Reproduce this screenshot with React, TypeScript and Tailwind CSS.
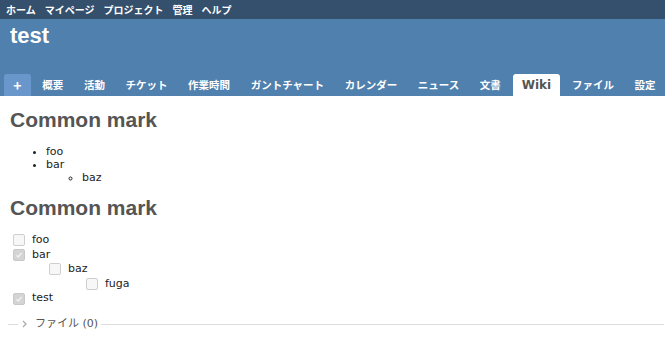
import React from "react";

const topItems = ["ホーム", "マイページ", "プロジェクト", "管理", "ヘルプ"];
const tabs = ["概要", "活動", "チケット", "作業時間", "ガントチャート", "カレンダー", "ニュース", "文書", "Wiki", "ファイル", "設定"];

function Box({ checked, className }: { checked?: boolean; className?: string }) {
  return (
    <span
      className={
        "inline-flex items-center justify-center w-[12px] h-[12px] rounded-[2px] border " +
        (checked ? "border-[#c8c8c8] bg-[#d4d4d4]" : "border-[#cfcfcf] bg-[#f7f7f7]") +
        " " +
        (className ?? "")
      }
    >
      {checked && (
        <svg width="8" height="8" viewBox="0 0 8 8">
          <path d="M1.5 4.2 L3.2 6 L6.6 1.8" stroke="#f4f4f4" strokeWidth="1.3" fill="none" />
        </svg>
      )}
    </span>
  );
}

export default function App() {
  return (
    <div className="w-[665px] h-[341px] overflow-hidden bg-white font-['DejaVu_Sans','Noto_Sans_CJK_JP',sans-serif]">
      <div className="h-[19px] bg-[#34506d] flex items-center gap-[9px] pl-[6px] text-[10px] font-bold text-white font-['Noto_Sans_CJK_JP',sans-serif]">
        {topItems.map((t) => (
          <span key={t}>{t}</span>
        ))}
      </div>
      <div className="h-[77px] bg-[#5080ad] flex flex-col justify-between">
        <h1 className="pl-[10px] pt-[3px] text-[22px] leading-[28px] font-bold text-white font-['Liberation_Sans',sans-serif]">test</h1>
        <ul className="flex items-end pl-[4px] h-[22px] whitespace-nowrap font-['Noto_Sans_CJK_JP',sans-serif] font-bold text-[10.5px] text-white">
          <li className="shrink-0 w-[27px] h-[22px] mr-[1px] rounded-t-[3px] bg-[#6a97cb] flex items-center justify-center text-[14px]">+</li>
          {tabs.map((t) => (
            <li
              key={t}
              className={
                t === "Wiki"
                  ? "shrink-0 h-[22px] px-[9px] mx-[1.5px] rounded-t-[3px] bg-white text-[#555] text-[12px] font-['DejaVu_Sans',sans-serif] flex items-center"
                  : "shrink-0 h-[22px] px-[10.3px] flex items-center"
              }
            >
              {t}
            </li>
          ))}
        </ul>
      </div>
      <div className="px-[10px] text-[11px] text-[#222]">
        <h2 className="mt-[10px] text-[21px] leading-[28px] font-bold text-[#555] font-['Liberation_Sans',sans-serif]">
          Common mark
        </h2>
        <ul className="mt-[11px] pl-[36px] list-disc leading-[13px]">
          <li>foo</li>
          <li>
            bar
            <ul className="pl-[36px] list-[circle]">
              <li>baz</li>
            </ul>
          </li>
        </ul>
        <h2 className="mt-[10px] text-[21px] leading-[28px] font-bold text-[#555] font-['Liberation_Sans',sans-serif]">
          Common mark
        </h2>
        <div className="mt-[11px] leading-[14.6px]">
          <div className="flex items-center gap-[7px] pl-[3px]">
            <Box />
            <span>foo</span>
          </div>
          <div className="flex items-center gap-[7px] pl-[3px]">
            <Box checked />
            <span>bar</span>
          </div>
          <div className="flex items-center gap-[7px] pl-[39px]">
            <Box />
            <span>baz</span>
          </div>
          <div className="flex items-center gap-[7px] pl-[76px]">
            <Box />
            <span>fuga</span>
          </div>
          <div className="flex items-center gap-[7px] pl-[3px]">
            <Box checked />
            <span>test</span>
          </div>
        </div>
      </div>
      <div className="mt-[10px] ml-[8px] mr-[1px] flex items-center text-[11px] text-[#555]">
        <span className="w-[10px] border-t border-[#ddd]" />
        <svg className="ml-[4px] mr-[8px]" width="5" height="8" viewBox="0 0 5 8">
          <path d="M1 1 L4 4 L1 7" stroke="#aaa" strokeWidth="1.3" fill="none" />
        </svg>
        <span>ファイル (0)</span>
        <span className="flex-1 ml-[3px] border-t border-[#ddd]" />
      </div>
    </div>
  );
}
